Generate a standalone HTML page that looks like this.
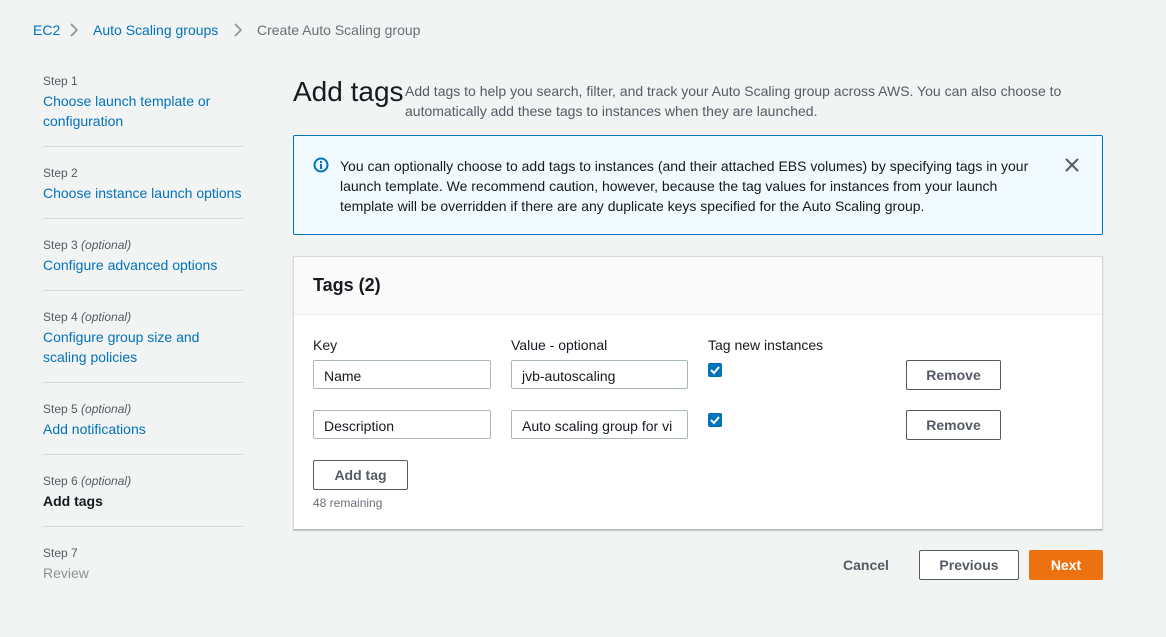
<!DOCTYPE html>
<html><head><meta charset="utf-8"><style>
*{box-sizing:border-box;margin:0;padding:0}
body{width:1166px;height:637px;background:#f2f3f3;font-family:"Liberation Sans","DejaVu Sans",sans-serif;font-size:14px;color:#16191f;position:relative;overflow:hidden}
.a{position:absolute;white-space:nowrap}
.link{color:#0073bb}
.step{font-size:12px;color:#545b64}
.hr{position:absolute;left:43px;width:200px;height:1px;background:#d5dbdb}
.inp{position:absolute;height:29px;border:1px solid #aab7b8;border-radius:2px;background:#fff;padding-left:10px;line-height:31px;font-size:14px;color:#16191f;overflow:hidden}
.btn{position:absolute;height:30px;border:1px solid #545b64;border-radius:2px;background:#fff;color:#545b64;font-weight:bold;text-align:center;line-height:28px;font-size:14px}
.cb{position:absolute;width:14px;height:14px;background:#0073bb;border-radius:2px}
</style></head><body>
<div class="a link" style="left:33px;top:22px">EC2</div>
<svg class="a" style="left:68px;top:22px" width="12" height="16"><path d="M3 2l6 6-6 6" stroke="#879596" stroke-width="1.6" fill="none"/></svg>
<div class="a link" style="left:93px;top:22px">Auto Scaling groups</div>
<svg class="a" style="left:232px;top:22px" width="12" height="16"><path d="M3 2l6 6-6 6" stroke="#879596" stroke-width="1.6" fill="none"/></svg>
<div class="a" style="left:257px;top:22px;color:#687078">Create Auto Scaling group</div>

<div class="a step" style="left:43px;top:74px">Step 1</div>
<div class="a link" style="left:43px;top:91px;line-height:20px;white-space:normal;width:200px">Choose launch template or configuration</div>
<div class="hr" style="top:146px"></div>
<div class="a step" style="left:43px;top:166px">Step 2</div>
<div class="a link" style="left:43px;top:185px">Choose instance launch options</div>
<div class="hr" style="top:218px"></div>
<div class="a step" style="left:43px;top:238px">Step 3 <i>(optional)</i></div>
<div class="a link" style="left:43px;top:257px">Configure advanced options</div>
<div class="hr" style="top:290px"></div>
<div class="a step" style="left:43px;top:310px">Step 4 <i>(optional)</i></div>
<div class="a link" style="left:43px;top:327px;line-height:20px;white-space:normal;width:200px">Configure group size and scaling policies</div>
<div class="hr" style="top:382px"></div>
<div class="a step" style="left:43px;top:402px">Step 5 <i>(optional)</i></div>
<div class="a link" style="left:43px;top:421px">Add notifications</div>
<div class="hr" style="top:454px"></div>
<div class="a step" style="left:43px;top:474px">Step 6 <i>(optional)</i></div>
<div class="a" style="left:43px;top:493px;font-weight:bold">Add tags</div>
<div class="hr" style="top:526px"></div>
<div class="a step" style="left:43px;top:546px">Step 7</div>
<div class="a" style="left:43px;top:565px;color:#879596">Review</div>

<div class="a" style="left:293px;top:76px;font-size:28px">Add tags</div>
<div class="a" style="left:405px;top:81px;color:#545b64;line-height:20px;white-space:normal;width:680px">Add tags to help you search, filter, and track your Auto Scaling group across AWS. You can also choose to automatically add these tags to instances when they are launched.</div>

<div class="a" style="left:293px;top:135px;width:810px;height:100px;background:#f1faff;border:1px solid #0073bb;border-radius:2px"></div>
<svg class="a" style="left:313px;top:157px" width="16" height="16"><circle cx="8" cy="8" r="6.5" stroke="#0073bb" stroke-width="2" fill="none"/><rect x="7" y="7" width="2" height="5" fill="#0073bb"/><rect x="7" y="4" width="2" height="2" fill="#0073bb"/></svg>
<div class="a" style="left:340px;top:156px;width:710px;white-space:normal;line-height:20px">You can optionally choose to add tags to instances (and their attached EBS volumes) by specifying tags in your launch template. We recommend caution, however, because the tag values for instances from your launch template will be overridden if there are any duplicate keys specified for the Auto Scaling group.</div>
<svg class="a" style="left:1064px;top:157px" width="16" height="16"><path d="M2 2l12 12M14 2L2 14" stroke="#545b64" stroke-width="2"/></svg>

<div class="a" style="left:293px;top:256px;width:810px;height:274px;background:#fff;border:1px solid #d5dbdb;border-bottom:1px solid #aab7b8;box-shadow:0 1px 1px rgba(0,28,36,.2)"></div>
<div class="a" style="left:294px;top:257px;width:808px;height:58px;background:#fafafa;border-bottom:1px solid #eaeded"></div>
<div class="a" style="left:313px;top:275px;font-size:18px;font-weight:bold">Tags (2)</div>

<div class="a" style="left:313px;top:337px">Key</div>
<div class="a" style="left:511px;top:337px">Value - optional</div>
<div class="a" style="left:708px;top:337px">Tag new instances</div>
<div class="inp" style="left:313px;top:360px;width:178px">Name</div>
<div class="inp" style="left:511px;top:360px;width:177px">jvb-autoscaling</div>
<div class="inp" style="left:313px;top:410px;width:178px">Description</div>
<div class="inp" style="left:511px;top:410px;width:177px">Auto scaling group for vi</div>
<div class="cb" style="left:708px;top:363px"><svg width="14" height="14"><path d="M3 7l3 3 5-6" stroke="#fff" stroke-width="2" fill="none"/></svg></div>
<div class="cb" style="left:708px;top:413px"><svg width="14" height="14"><path d="M3 7l3 3 5-6" stroke="#fff" stroke-width="2" fill="none"/></svg></div>
<div class="btn" style="left:906px;top:360px;width:95px">Remove</div>
<div class="btn" style="left:906px;top:410px;width:95px">Remove</div>
<div class="btn" style="left:313px;top:460px;width:95px">Add tag</div>
<div class="a" style="left:313px;top:496px;font-size:12px;color:#687078">48 remaining</div>

<div class="a" style="left:843px;top:557px;font-weight:bold;color:#545b64">Cancel</div>
<div class="btn" style="left:919px;top:550px;width:100px">Previous</div>
<div class="btn" style="left:1029px;top:550px;width:74px;background:#ec7211;border-color:#ec7211;color:#fff">Next</div>
</body></html>
